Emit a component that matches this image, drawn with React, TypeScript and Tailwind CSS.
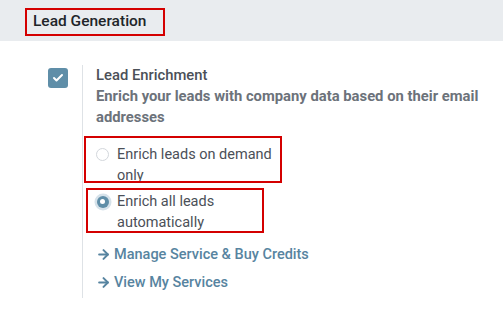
import { ArrowRight, Check } from "lucide-react";

const font = { fontFamily: 'Roboto, "Open Sans", sans-serif' };

function RadioOption({
  checked,
  lines,
}: {
  checked?: boolean;
  lines: string[];
}) {
  return (
    <div className="flex items-start">
      <div className="mr-[8px] flex h-[21px] w-[13px] shrink-0 items-center justify-center">
        {checked ? (
          <span className="flex h-[12px] w-[12px] shrink-0 items-center justify-center rounded-full bg-[#5f8ea8] ring-[2.5px] ring-[#d6e2ea]">
            <span className="h-[5px] w-[5px] rounded-full bg-white" />
          </span>
        ) : (
          <span className="h-[13px] w-[13px] shrink-0 rounded-full border border-[#d3d7dc] bg-white" />
        )}
      </div>
      <p className="text-[14.5px] leading-[21px] text-[#4b5058]">
        {lines.map((line, i) => (
          <span key={i} className="block whitespace-nowrap">
            {line}
          </span>
        ))}
      </p>
    </div>
  );
}

export default function App() {
  return (
    <div className="h-[312px] w-[503px] overflow-hidden bg-white" style={font}>
      <div className="h-[41px] bg-[#e9ecef] pl-[25px] pt-[8px]">
        <span className="flex h-[28px] w-[140px] items-center border-2 border-[#d40000] pl-[6px] text-[15.5px] font-medium text-[#212529]">
          Lead Generation
        </span>
      </div>

      <div className="flex pt-[24px] pl-[48px]">
        <div className="pt-[3px]">
          <span className="flex h-[20px] w-[20px] items-center justify-center rounded-[3px] bg-[#5f8ea8]">
            <Check className="h-[12px] w-[12px] text-white" strokeWidth={4} />
          </span>
        </div>

        <div className="ml-[14px] h-[233px] border-l border-[#dee2e6] pl-[13px]">
          <p className="text-[14.8px] font-medium leading-[21px] text-[#4b5058]">
            Lead Enrichment
          </p>
          <p className="text-[14.8px] font-bold leading-[21px] text-[#6c727a]">
            <span className="block whitespace-nowrap">
              Enrich your leads with company data based on their email
            </span>
            <span className="block">addresses</span>
          </p>

          <div className="mt-[16px] flex flex-col gap-[5px]">
            <div className="relative">
              <RadioOption lines={["Enrich leads on demand", "only"]} />
              <div className="pointer-events-none absolute -top-[8px] left-[-12px] h-[47px] w-[198px] border-2 border-[#d40000]" />
            </div>
            <div className="relative">
              <RadioOption checked lines={["Enrich all leads", "automatically"]} />
              <div className="pointer-events-none absolute -top-[3px] left-[-10px] h-[45px] w-[178px] border-2 border-[#d40000]" />
            </div>
          </div>

          <div className="mt-[11px] flex flex-col gap-[7px] text-[14.5px] font-medium leading-[21px] text-[#5784a0]">
            <a className="flex items-center gap-[3px]">
              <ArrowRight className="h-[15px] w-[15px]" strokeWidth={3.2} />
              Manage Service &amp; Buy Credits
            </a>
            <a className="flex items-center gap-[3px]">
              <ArrowRight className="h-[15px] w-[15px]" strokeWidth={3.2} />
              View My Services
            </a>
          </div>
        </div>
      </div>
    </div>
  );
}
